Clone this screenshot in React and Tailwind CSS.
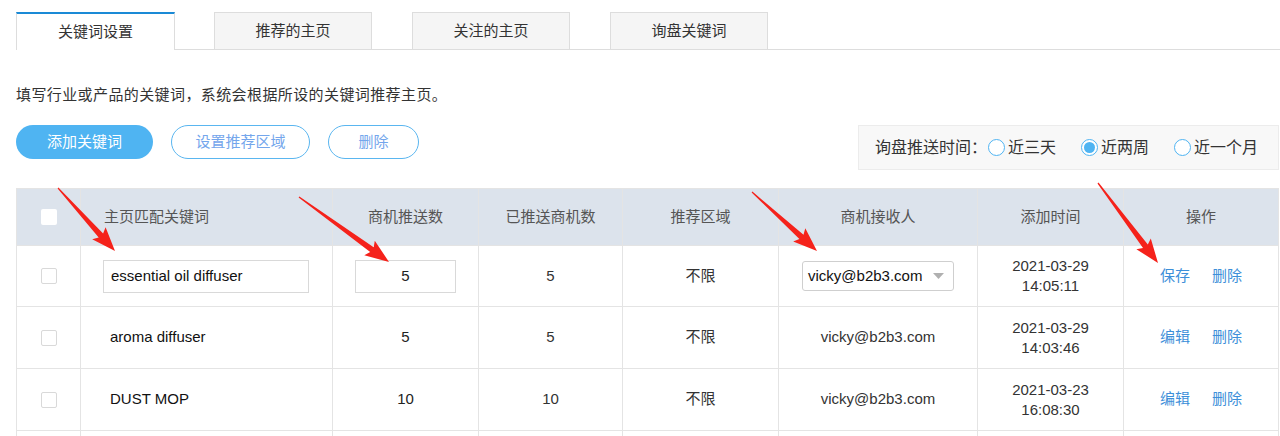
import React from 'react';

const FONT = "font-['Liberation_Sans','Noto_Sans_CJK_SC',sans-serif]";

const rows = [
  { kw: 'aroma diffuser', n: 5, sent: 5, region: '不限', to: 'vicky@b2b3.com', date: '2021-03-29', time: '14:03:46' },
  { kw: 'DUST MOP', n: 10, sent: 10, region: '不限', to: 'vicky@b2b3.com', date: '2021-03-23', time: '16:08:30' },
];

const arrows = [
  [58, 188, 115, 251],
  [299, 197, 389, 262],
  [752, 192, 817, 251],
  [1098, 183, 1158, 263],
];

// tapered red annotation arrow, start -> tip
function arrowPoints(x1, y1, x2, y2) {
  const dx = x2 - x1;
  const dy = y2 - y1;
  const len = Math.hypot(dx, dy);
  const ux = dx / len;
  const uy = dy / len;
  const nx = -uy;
  const ny = ux;
  const h = 24;
  const ws = 3;
  const wh = 9;
  const bx = x2 - ux * h;
  const by = y2 - uy * h;
  const p = [
    [x1 + nx * 0.6, y1 + ny * 0.6],
    [bx + nx * ws + ux * 3, by + ny * ws + uy * 3],
    [bx + nx * wh, by + ny * wh],
    [x2, y2],
    [bx - nx * wh, by - ny * wh],
    [bx - nx * ws + ux * 3, by - ny * ws + uy * 3],
    [x1 - nx * 0.6, y1 - ny * 0.6],
  ];
  return p.map((q) => q.map((v) => v.toFixed(1)).join(',')).join(' ');
}

function Checkbox({ header }) {
  return (
    <span
      className={
        header
          ? 'block w-4 h-4 bg-white rounded-[2px]'
          : 'block w-4 h-4 bg-white border border-[#d9d9d9] rounded-[2px]'
      }
    />
  );
}

function Radio({ checked, label }) {
  return (
    <label className="flex items-center gap-[3px]">
      <span className="w-[17px] h-[17px] rounded-full border border-[#4fb4f2] bg-white flex items-center justify-center">
        {checked && <span className="w-[11px] h-[11px] rounded-full bg-[#4fb4f2]" />}
      </span>
      <span>{label}</span>
    </label>
  );
}

function Ops({ first }) {
  return (
    <div className="flex justify-center gap-[22px] text-[#3d8fd9]">
      <span>{first}</span>
      <span>删除</span>
    </div>
  );
}

export default function App() {
  const td = 'border border-[#e4e4e4] text-center align-middle';
  const th = 'border border-[#e4e4e4] text-center align-middle font-normal text-[#555]';

  return (
    <div className={`relative h-[436px] w-[1280px] overflow-hidden bg-white text-[15px] text-[#333] ${FONT}`}>
      {/* tabs */}
      <div className="ml-4 pt-3 flex items-end border-b border-[#dddddd]">
        <div className="w-[159px] h-[38px] -mb-px bg-white border-t-2 border-t-[#1a8ad6] border-x border-x-[#dddddd] flex items-center justify-center">
          关键词设置
        </div>
        <div className="ml-[39px] w-[158px] h-[37px] bg-[#f5f5f5] border-t border-x border-[#dddddd] flex items-center justify-center">
          推荐的主页
        </div>
        <div className="ml-[40px] w-[158px] h-[37px] bg-[#f5f5f5] border-t border-x border-[#dddddd] flex items-center justify-center">
          关注的主页
        </div>
        <div className="ml-[40px] w-[158px] h-[37px] bg-[#f5f5f5] border-t border-x border-[#dddddd] flex items-center justify-center">
          询盘关键词
        </div>
      </div>

      <p className="ml-4 mt-[35px] leading-5 tracking-[0.4px]">填写行业或产品的关键词，系统会根据所设的关键词推荐主页。</p>

      {/* toolbar */}
      <div className="ml-4 mr-[1px] mt-5 flex items-start justify-between">
        <div className="flex gap-[18px]">
          <button className="w-[137px] h-[34px] rounded-full bg-[#4fb4f2] text-white text-[15px]">添加关键词</button>
          <button className="w-[139px] h-[34px] rounded-full border border-[#5ab6f0] text-[#74a6ec] text-[15px]">
            设置推荐区域
          </button>
          <button className="w-[91px] h-[34px] rounded-full border border-[#5ab6f0] text-[#74a6ec] text-[15px]">删除</button>
        </div>
        <div className="w-[421px] h-[45px] bg-[#f8f8f8] border border-[#ececec] flex items-center pl-4 text-[16px]">
          <span className="mr-[1px]">询盘推送时间：</span>
          <Radio label="近三天" />
          <span className="w-[25px]" />
          <Radio checked label="近两周" />
          <span className="w-[25px]" />
          <Radio label="近一个月" />
        </div>
      </div>

      {/* table */}
      <table className="ml-4 mt-[18px] table-fixed border-collapse w-[1262px]">
        <colgroup>
          <col className="w-[64px]" />
          <col className="w-[252px]" />
          <col className="w-[146px]" />
          <col className="w-[144px]" />
          <col className="w-[156px]" />
          <col className="w-[199px]" />
          <col className="w-[146px]" />
          <col className="w-[155px]" />
        </colgroup>
        <thead>
          <tr className="h-[57px] bg-[#dce3ec]">
            <th className={th}>
              <div className="flex justify-center">
                <Checkbox header />
              </div>
            </th>
            <th className={`${th} !text-left pl-[23px]`}>主页匹配关键词</th>
            <th className={th}>商机推送数</th>
            <th className={th}>已推送商机数</th>
            <th className={th}>推荐区域</th>
            <th className={th}>商机接收人</th>
            <th className={th}>添加时间</th>
            <th className={th}>操作</th>
          </tr>
        </thead>
        <tbody>
          <tr className="h-[61px]">
            <td className={td}>
              <div className="flex justify-center">
                <Checkbox />
              </div>
            </td>
            <td className={`${td} !text-left pl-[22px]`}>
              <div className="w-[206px] h-[33px] border border-[#d9d9d9] flex items-center px-[7px] text-[#111]">
                essential oil diffuser
              </div>
            </td>
            <td className={td}>
              <div className="mx-auto w-[101px] h-[33px] border border-[#d9d9d9] flex items-center justify-center text-[#222]">
                5
              </div>
            </td>
            <td className={td}>5</td>
            <td className={td}>不限</td>
            <td className={td}>
              <div className="mx-auto w-[152px] h-[30px] border border-[#cfcfcf] rounded-[3px] flex items-center justify-between pl-[5px] pr-[9px] text-[#111]">
                <span>vicky@b2b3.com</span>
                <svg width="11" height="6" viewBox="0 0 11 6">
                  <path d="M0 0 H11 L5.5 6 Z" fill="#b0b0b0" />
                </svg>
              </div>
            </td>
            <td className={`${td} leading-5`}>
              2021-03-29
              <br />
              14:05:11
            </td>
            <td className={td}>
              <Ops first="保存" />
            </td>
          </tr>
          {rows.map((r) => (
            <tr key={r.kw} className="h-[62px]">
              <td className={td}>
                <div className="flex justify-center">
                  <Checkbox />
                </div>
              </td>
              <td className={`${td} !text-left pl-[29px] text-[#111]`}>{r.kw}</td>
              <td className={`${td} text-[#222]`}>{r.n}</td>
              <td className={td}>{r.sent}</td>
              <td className={td}>{r.region}</td>
              <td className={td}>{r.to}</td>
              <td className={`${td} leading-5`}>
                {r.date}
                <br />
                {r.time}
              </td>
              <td className={td}>
                <Ops first="编辑" />
              </td>
            </tr>
          ))}
          <tr className="h-[62px]">
            <td className={td} />
            <td className={td} />
            <td className={td} />
            <td className={td} />
            <td className={td} />
            <td className={td} />
            <td className={td} />
            <td className={td} />
          </tr>
        </tbody>
      </table>

      {/* red annotation arrows */}
      <svg className="absolute left-0 top-0 pointer-events-none" width="1280" height="436">
        {arrows.map((a, i) => (
          <polygon key={i} points={arrowPoints(...a)} fill="#f5221b" />
        ))}
      </svg>
    </div>
  );
}
